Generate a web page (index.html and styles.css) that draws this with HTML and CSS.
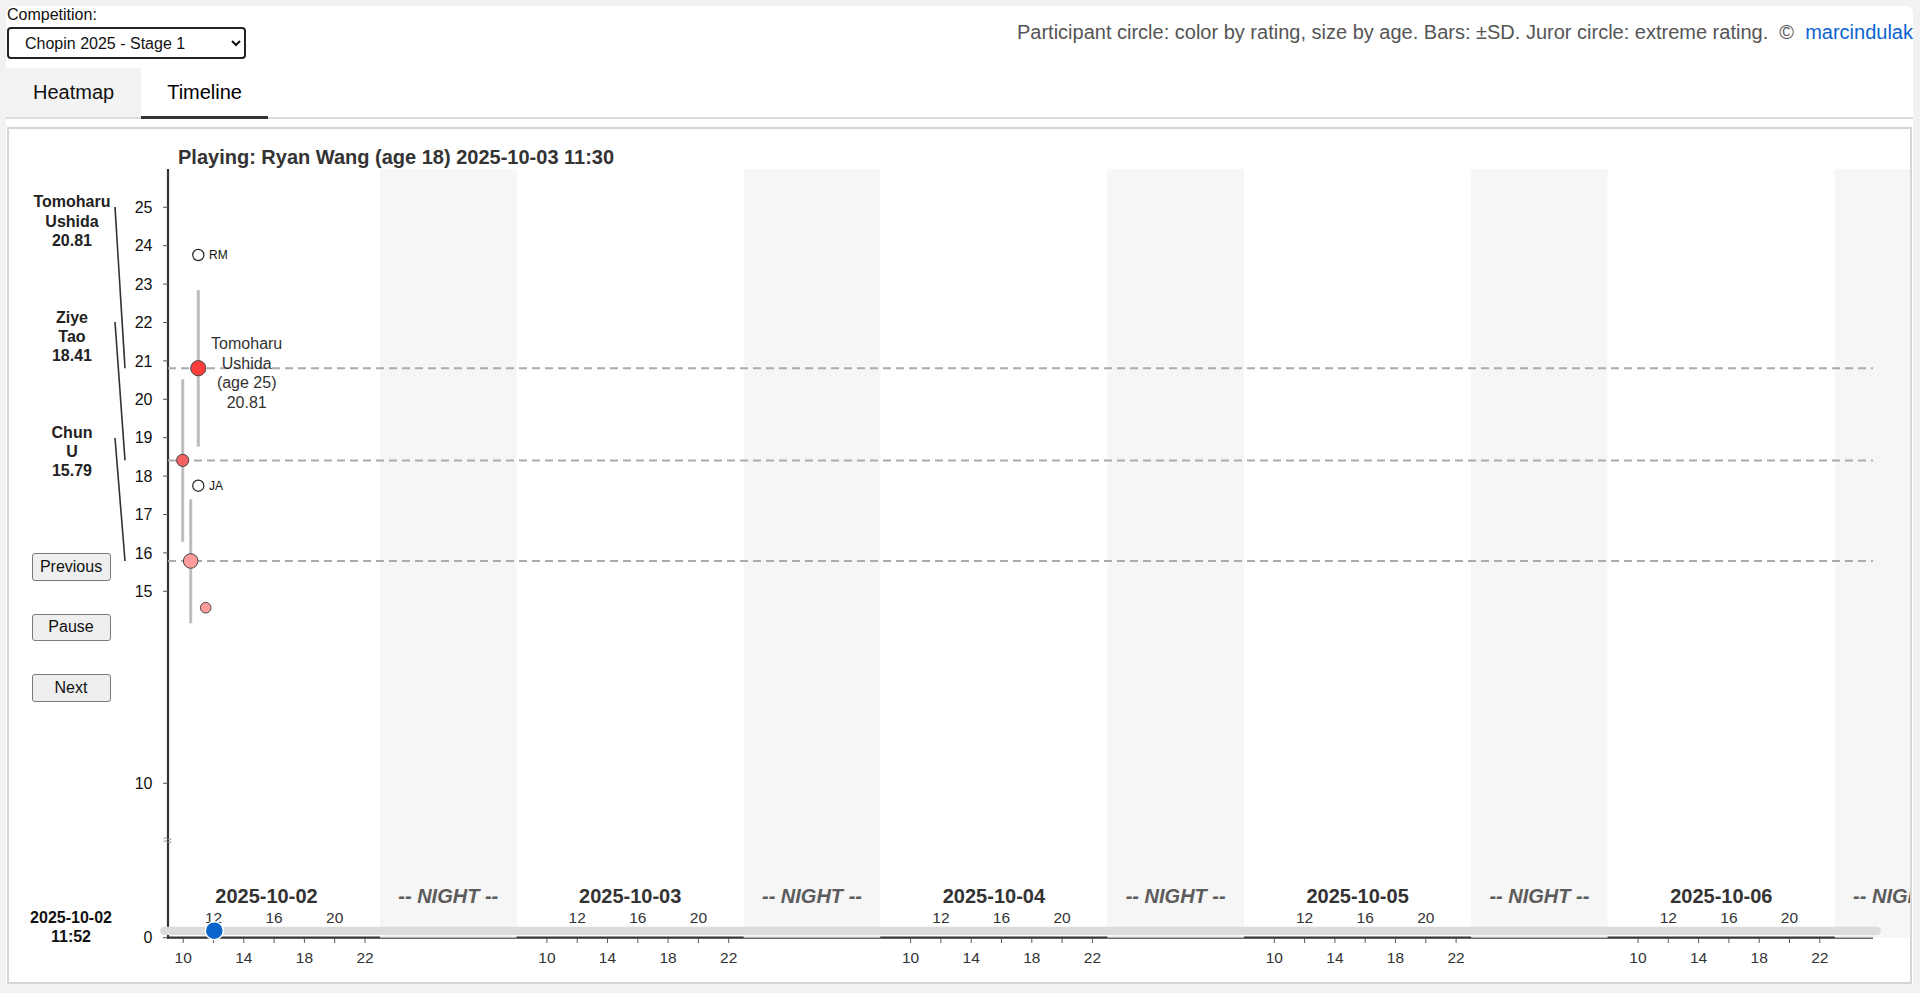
FILE: index.html
```html
<!DOCTYPE html>
<html lang="en">
<head>
<meta charset="utf-8">
<title>Chopin 2025 - Timeline</title>
<link rel="stylesheet" href="styles.css">
</head>
<body>
<div class="app">
  <header class="top">
    <div class="picker">
      <label class="picker-label" for="comp">Competition:</label>
      <select id="comp" class="picker-select">
        <option>Chopin 2025 - Stage 1</option>
      </select>
    </div>
    <p class="legend">Participant circle: color by rating, size by age. Bars: ±SD. Juror circle: extreme rating. &nbsp;©&nbsp; <a href="#" class="legend-link">marcindulak</a></p>
  </header>

  <nav class="tabs">
    <button class="tab">Heatmap</button>
    <button class="tab tab-active">Timeline</button>
  </nav>

  <section class="chart">
    <svg class="plot" viewBox="9 129 1901 853" width="1901" height="853" xmlns="http://www.w3.org/2000/svg">
      <text class="title" x="178" y="164">Playing: Ryan Wang (age 18) 2025-10-03 11:30</text>

      <!-- axes -->
      <line class="axis" x1="168" y1="169" x2="168" y2="938.7"/>
      <line class="axis" x1="167" y1="937.7" x2="1873" y2="937.7"/>

      <g class="ytick">
        <line x1="163" y1="207.3" x2="168" y2="207.3"/><text x="152.5" y="213">25</text>
        <line x1="163" y1="245.7" x2="168" y2="245.7"/><text x="152.5" y="251.4">24</text>
        <line x1="163" y1="284.1" x2="168" y2="284.1"/><text x="152.5" y="289.8">23</text>
        <line x1="163" y1="322.5" x2="168" y2="322.5"/><text x="152.5" y="328.2">22</text>
        <line x1="163" y1="360.9" x2="168" y2="360.9"/><text x="152.5" y="366.6">21</text>
        <line x1="163" y1="399.3" x2="168" y2="399.3"/><text x="152.5" y="405">20</text>
        <line x1="163" y1="437.7" x2="168" y2="437.7"/><text x="152.5" y="443.4">19</text>
        <line x1="163" y1="476.1" x2="168" y2="476.1"/><text x="152.5" y="481.8">18</text>
        <line x1="163" y1="514.5" x2="168" y2="514.5"/><text x="152.5" y="520.2">17</text>
        <line x1="163" y1="552.9" x2="168" y2="552.9"/><text x="152.5" y="558.6">16</text>
        <line x1="163" y1="591.3" x2="168" y2="591.3"/><text x="152.5" y="597">15</text>
        <line x1="163" y1="783.3" x2="168" y2="783.3"/><text x="152.5" y="789">10</text>
        <line x1="163" y1="937.7" x2="168" y2="937.7"/><text x="152.5" y="943.4">0</text>
      </g>
      <path class="brk" d="M163.5 838.8 q2 -2.2 4 0 t4 0 M163.5 841.8 q2 -2.2 4 0 t4 0"/>

      <!-- days -->
      <g class="day">
        <rect class="night" x="380" y="169" width="136.5" height="768.7"/>
        <g class="xtick">
          <line x1="183.2" y1="938" x2="183.2" y2="943"/><line x1="213.5" y1="938" x2="213.5" y2="943"/>
          <line x1="243.8" y1="938" x2="243.8" y2="943"/><line x1="274.1" y1="938" x2="274.1" y2="943"/>
          <line x1="304.4" y1="938" x2="304.4" y2="943"/><line x1="334.7" y1="938" x2="334.7" y2="943"/>
          <line x1="365" y1="938" x2="365" y2="943"/>
        </g>
        <g class="xlabel">
          <text x="183.2" y="963">10</text><text x="243.8" y="963">14</text><text x="304.4" y="963">18</text><text x="365" y="963">22</text>
          <text x="213.5" y="923">12</text><text x="274.1" y="923">16</text><text x="334.7" y="923">20</text>
        </g>
        <text class="date" x="266.5" y="903.3">2025-10-02</text>
        <text class="night-label" x="448.3" y="903.3">-- NIGHT --</text>
      </g>
      <g class="day" transform="translate(363.7 0)">
        <rect class="night" x="380" y="169" width="136.5" height="768.7"/>
        <g class="xtick">
          <line x1="183.2" y1="938" x2="183.2" y2="943"/><line x1="213.5" y1="938" x2="213.5" y2="943"/>
          <line x1="243.8" y1="938" x2="243.8" y2="943"/><line x1="274.1" y1="938" x2="274.1" y2="943"/>
          <line x1="304.4" y1="938" x2="304.4" y2="943"/><line x1="334.7" y1="938" x2="334.7" y2="943"/>
          <line x1="365" y1="938" x2="365" y2="943"/>
        </g>
        <g class="xlabel">
          <text x="183.2" y="963">10</text><text x="243.8" y="963">14</text><text x="304.4" y="963">18</text><text x="365" y="963">22</text>
          <text x="213.5" y="923">12</text><text x="274.1" y="923">16</text><text x="334.7" y="923">20</text>
        </g>
        <text class="date" x="266.5" y="903.3">2025-10-03</text>
        <text class="night-label" x="448.3" y="903.3">-- NIGHT --</text>
      </g>
      <g class="day" transform="translate(727.4 0)">
        <rect class="night" x="380" y="169" width="136.5" height="768.7"/>
        <g class="xtick">
          <line x1="183.2" y1="938" x2="183.2" y2="943"/><line x1="213.5" y1="938" x2="213.5" y2="943"/>
          <line x1="243.8" y1="938" x2="243.8" y2="943"/><line x1="274.1" y1="938" x2="274.1" y2="943"/>
          <line x1="304.4" y1="938" x2="304.4" y2="943"/><line x1="334.7" y1="938" x2="334.7" y2="943"/>
          <line x1="365" y1="938" x2="365" y2="943"/>
        </g>
        <g class="xlabel">
          <text x="183.2" y="963">10</text><text x="243.8" y="963">14</text><text x="304.4" y="963">18</text><text x="365" y="963">22</text>
          <text x="213.5" y="923">12</text><text x="274.1" y="923">16</text><text x="334.7" y="923">20</text>
        </g>
        <text class="date" x="266.5" y="903.3">2025-10-04</text>
        <text class="night-label" x="448.3" y="903.3">-- NIGHT --</text>
      </g>
      <g class="day" transform="translate(1091.1 0)">
        <rect class="night" x="380" y="169" width="136.5" height="768.7"/>
        <g class="xtick">
          <line x1="183.2" y1="938" x2="183.2" y2="943"/><line x1="213.5" y1="938" x2="213.5" y2="943"/>
          <line x1="243.8" y1="938" x2="243.8" y2="943"/><line x1="274.1" y1="938" x2="274.1" y2="943"/>
          <line x1="304.4" y1="938" x2="304.4" y2="943"/><line x1="334.7" y1="938" x2="334.7" y2="943"/>
          <line x1="365" y1="938" x2="365" y2="943"/>
        </g>
        <g class="xlabel">
          <text x="183.2" y="963">10</text><text x="243.8" y="963">14</text><text x="304.4" y="963">18</text><text x="365" y="963">22</text>
          <text x="213.5" y="923">12</text><text x="274.1" y="923">16</text><text x="334.7" y="923">20</text>
        </g>
        <text class="date" x="266.5" y="903.3">2025-10-05</text>
        <text class="night-label" x="448.3" y="903.3">-- NIGHT --</text>
      </g>
      <g class="day" transform="translate(1454.8 0)">
        <rect class="night" x="380" y="169" width="136.5" height="768.7"/>
        <g class="xtick">
          <line x1="183.2" y1="938" x2="183.2" y2="943"/><line x1="213.5" y1="938" x2="213.5" y2="943"/>
          <line x1="243.8" y1="938" x2="243.8" y2="943"/><line x1="274.1" y1="938" x2="274.1" y2="943"/>
          <line x1="304.4" y1="938" x2="304.4" y2="943"/><line x1="334.7" y1="938" x2="334.7" y2="943"/>
          <line x1="365" y1="938" x2="365" y2="943"/>
        </g>
        <g class="xlabel">
          <text x="183.2" y="963">10</text><text x="243.8" y="963">14</text><text x="304.4" y="963">18</text><text x="365" y="963">22</text>
          <text x="213.5" y="923">12</text><text x="274.1" y="923">16</text><text x="334.7" y="923">20</text>
        </g>
        <text class="date" x="266.5" y="903.3">2025-10-06</text>
        <text class="night-label" x="448.3" y="903.3">-- NIGHT --</text>
      </g>

      <!-- slider -->
      <rect class="track" x="160" y="926.7" width="1721" height="8.3" rx="4.15"/>
      <circle class="thumb" cx="214.3" cy="930.7" r="9"/>

      <!-- reference lines -->
      <line class="ref" x1="168" y1="368.2" x2="1873" y2="368.2"/>
      <line class="ref" x1="168" y1="460.4" x2="1873" y2="460.4"/>
      <line class="ref" x1="168" y1="561" x2="1873" y2="561"/>

      <!-- side labels and connectors -->
      <g class="side-label">
        <text x="72" y="207.3">Tomoharu</text><text x="72" y="226.5">Ushida</text><text x="72" y="245.7">20.81</text>
        <text x="72" y="323.3">Ziye</text><text x="72" y="342">Tao</text><text x="72" y="360.7">18.41</text>
        <text x="72" y="438.3">Chun</text><text x="72" y="457.3">U</text><text x="72" y="476.3">15.79</text>
      </g>
      <line class="connector" x1="115" y1="207" x2="125" y2="368.2"/>
      <line class="connector" x1="115" y1="322" x2="125" y2="460.4"/>
      <line class="connector" x1="115" y1="438" x2="125" y2="561"/>

      <!-- error bars -->
      <line class="bar" x1="198.3" y1="290" x2="198.3" y2="446.7"/>
      <line class="bar" x1="182.7" y1="379.3" x2="182.7" y2="541.7"/>
      <line class="bar" x1="190.7" y1="499.3" x2="190.7" y2="623.3"/>

      <!-- jurors -->
      <circle class="juror" cx="198.3" cy="255" r="5.6"/>
      <text class="juror-label" x="209" y="259">RM</text>
      <circle class="juror" cx="198.3" cy="485.7" r="5.6"/>
      <text class="juror-label" x="209" y="489.5">JA</text>

      <!-- participants -->
      <circle class="pt" cx="182.7" cy="460.4" r="6.1" fill="#f26262"/>
      <circle class="pt" cx="190.7" cy="561" r="7.3" fill="#ff9b9b"/>
      <circle class="pt" cx="205.7" cy="607.7" r="5.3" fill="#ff9d9d"/>
      <circle class="pt" cx="198.3" cy="368.2" r="7.6" fill="#ff3c3c"/>

      <g class="pt-label">
        <text x="246.7" y="349.3">Tomoharu</text>
        <text x="246.7" y="368.8">Ushida</text>
        <text x="246.7" y="388.3">(age 25)</text>
        <text x="246.7" y="407.8">20.81</text>
      </g>
    </svg>

    <div class="controls">
      <div class="buttons">
        <button class="btn">Previous</button>
        <button class="btn">Pause</button>
        <button class="btn">Next</button>
      </div>
      <div class="clock">2025-10-02<br>11:52</div>
    </div>
  </section>
</div>
</body>
</html>
```

FILE: styles.css
```css
* { box-sizing: border-box; }

html, body {
  margin: 0;
  padding: 0;
  background: #f2f2f2;
  font-family: "Liberation Sans", Arial, sans-serif;
  color: #111;
  overflow: hidden;
}

body {
  padding: 6px 7px 0 6px;
}

.app {
  background: #fff;
  border-radius: 8px 8px 0 0;
  display: flex;
  flex-direction: column;
}

.top {
  display: flex;
  justify-content: space-between;
  align-items: center;
  padding-left: 1px;
}

.picker {
  display: flex;
  flex-direction: column;
  align-items: flex-start;
}

.picker-label {
  font-size: 16px;
  line-height: 18px;
  color: #111;
}

.picker-select {
  margin-top: 3px;
  width: 239px;
  height: 32px;
  border: 2px solid #222;
  border-radius: 4px;
  background: #fff;
  font-family: "Liberation Sans", Arial, sans-serif;
  font-size: 16px;
  color: #111;
  padding: 0 0 0 12px;
}

.legend {
  margin: 0;
  font-size: 20px;
  color: #555;
  white-space: nowrap;
}

.legend-link {
  color: #0b63d1;
  text-decoration: none;
}

.tabs {
  display: flex;
  margin-top: 9px;
  border-bottom: 2px solid #dcdcdc;
}

.tab {
  height: 51px;
  margin-bottom: -2px;
  padding: 0 27px;
  border: none;
  border-bottom: 2px solid transparent;
  background: #fff;
  background-clip: padding-box;
  font-family: "Liberation Sans", Arial, sans-serif;
  font-size: 20px;
  color: #111;
}

.tab:first-child {
  background-color: #f3f3f3;
}

.tab-active {
  padding: 0 26px;
  border-bottom: 3px solid #333;
  color: #000;
}

.chart {
  margin: 8px 1px 0 1px;
  border: 2px solid #d6d6d6;
  display: grid;
  background: #fff;
}

.plot,
.controls {
  grid-area: 1 / 1;
}

.plot {
  display: block;
  width: 1901px;
  height: 853px;
  font-family: "Liberation Sans", Arial, sans-serif;
}

.controls {
  width: 124px;
  display: flex;
  flex-direction: column;
  align-items: center;
  padding: 424px 0 36px 0;
  height: 853px;
}

.buttons {
  display: flex;
  flex-direction: column;
  gap: 33px;
}

.btn {
  width: 79px;
  height: 27.5px;
  padding: 0;
  border: 1px solid #7a7a7a;
  border-radius: 3px;
  background: #efefef;
  font-family: "Liberation Sans", Arial, sans-serif;
  font-size: 16px;
  color: #111;
}

.clock {
  margin-top: auto;
  text-align: center;
  font-size: 16px;
  line-height: 19px;
  font-weight: bold;
  color: #111;
}

/* svg parts */
.title {
  font-size: 20px;
  font-weight: bold;
  fill: #333;
}

.axis {
  stroke: #333;
  stroke-width: 2.2;
}

.ytick line { stroke: #555; stroke-width: 1; }
.ytick text {
  font-size: 16px;
  fill: #111;
  text-anchor: end;
}

.brk {
  fill: none;
  stroke: #888;
  stroke-width: 1;
}

.night {
  fill: #f5f5f5;
  fill-opacity: 0.93;
}

.xtick line { stroke: #555; stroke-width: 1; }

.xlabel text {
  font-size: 15.5px;
  fill: #333;
  text-anchor: middle;
}

.date {
  font-size: 20px;
  font-weight: bold;
  fill: #333;
  text-anchor: middle;
}

.night-label {
  font-size: 20px;
  font-weight: bold;
  font-style: italic;
  fill: #5c5c5c;
  text-anchor: middle;
}

.track {
  fill: #dcdcdc;
}

.thumb {
  fill: #0b63cc;
  stroke: #fff;
  stroke-width: 1.5;
}

.ref {
  stroke: #ababab;
  stroke-width: 2;
  stroke-dasharray: 8 5;
}

.side-label text {
  font-size: 16px;
  font-weight: bold;
  fill: #222;
  text-anchor: middle;
}

.connector {
  stroke: #333;
  stroke-width: 1.6;
}

.bar {
  stroke: #bdbdbd;
  stroke-width: 3;
}

.juror {
  fill: #fff;
  stroke: #222;
  stroke-width: 1.2;
}

.juror-label {
  font-size: 12px;
  fill: #111;
}

.pt {
  stroke: #444;
  stroke-width: 1;
}

.pt-label text {
  font-size: 16px;
  fill: #333;
  text-anchor: middle;
}
```
